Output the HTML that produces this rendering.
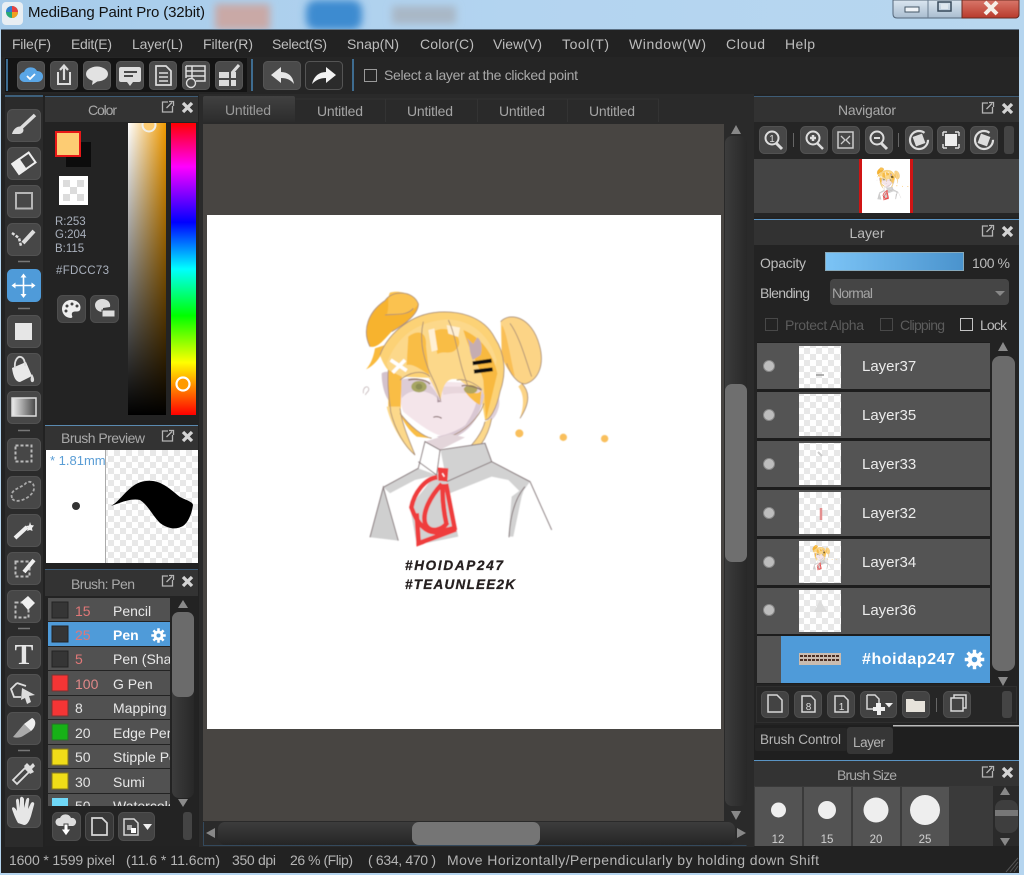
<!DOCTYPE html>
<html><head><meta charset="utf-8"><title>MediBang Paint Pro</title>
<style>html,body{margin:0;padding:0;background:#b3d4ee}svg{display:block}text{font-family:"Liberation Sans",sans-serif}</style></head>
<body>
<svg xmlns="http://www.w3.org/2000/svg" width="1024" height="875" viewBox="0 0 1024 875">
<defs>
<pattern id="ck2" width="12" height="12" patternUnits="userSpaceOnUse"><rect width="12" height="12" fill="#fff"/><rect width="6" height="6" fill="#e8e8e8"/><rect x="6" y="6" width="6" height="6" fill="#e8e8e8"/></pattern>
<linearGradient id="tb" x1="0" y1="0" x2="1" y2="0"><stop offset="0" stop-color="#a6cbea"/><stop offset=".5" stop-color="#b3d4f0"/><stop offset="1" stop-color="#b8d7ef"/></linearGradient>
<linearGradient id="sv" x1="0" y1="0" x2="1" y2="0"><stop offset="0" stop-color="#fff"/><stop offset="1" stop-color="#f09a00"/></linearGradient>
<linearGradient id="svk" x1="0" y1="0" x2="0" y2="1"><stop offset="0" stop-color="#000" stop-opacity="0"/><stop offset="1" stop-color="#000"/></linearGradient>
<linearGradient id="hue" x1="0" y1="0" x2="0" y2="1"><stop offset="0" stop-color="#f00"/><stop offset=".15" stop-color="#f0f"/><stop offset=".34" stop-color="#00f"/><stop offset=".5" stop-color="#0ff"/><stop offset=".66" stop-color="#0f0"/><stop offset=".82" stop-color="#ff0"/><stop offset="1" stop-color="#f00"/></linearGradient>
<linearGradient id="op" x1="0" y1="0" x2="1" y2="0"><stop offset="0" stop-color="#7cc4f6"/><stop offset="1" stop-color="#4a93cd"/></linearGradient>
<linearGradient id="sbv" x1="0" y1="0" x2="1" y2="0"><stop offset="0" stop-color="#3c3c3c"/><stop offset="1" stop-color="#282828"/></linearGradient>
<linearGradient id="sbh" x1="0" y1="0" x2="0" y2="1"><stop offset="0" stop-color="#3d3d3d"/><stop offset="1" stop-color="#252525"/></linearGradient>
<linearGradient id="cl" x1="0" y1="0" x2="0" y2="1"><stop offset="0" stop-color="#d9776a"/><stop offset="1" stop-color="#b83a2c"/></linearGradient>
<linearGradient id="wb" x1="0" y1="0" x2="0" y2="1"><stop offset="0" stop-color="#dbe6f0"/><stop offset="1" stop-color="#a9bdd0"/></linearGradient>
<linearGradient id="gs" x1="0" y1="0" x2="1" y2="0"><stop offset="0" stop-color="#eee"/><stop offset="1" stop-color="#444"/></linearGradient>
<linearGradient id="tab1" x1="0" y1="0" x2="0" y2="1"><stop offset="0" stop-color="#414141"/><stop offset="1" stop-color="#2c2c2c"/></linearGradient>
<filter id="b1"><feGaussianBlur stdDeviation="4"/></filter>
<filter id="b0"><feGaussianBlur stdDeviation=".45"/></filter>
<clipPath id="clipBrush"><rect x="48" y="598" width="122" height="208"/></clipPath>
<clipPath id="clipBP"><rect x="46" y="450" width="59" height="113"/></clipPath>
<clipPath id="clipSV"><rect x="128" y="123" width="38" height="292"/></clipPath>
<g id="hd" fill="none" stroke="#b5b5b5"><path d="M7 2H1.5V12H11.5V6" stroke-width="1.3"/><path d="M5.5 8L11 2.500M8 1.500H12.500V6" stroke-width="1.300"/><path d="M22 3L31 12M31 3L22 12" stroke="#d4d4d4" stroke-width="3.300"/></g>
<g id="gear" fill="#fff"><circle r="5.800"/><g stroke="#fff" stroke-width="3"><path d="M0-8.500V8.500M-8.500 0H8.500M-6-6L6 6M-6 6L6-6"/></g><circle r="2.400" fill="#4f9ad6"/></g>
<g id="art">
  <!-- back buns -->
  <path d="M60 200C35 150 55 95 105 62C125 30 190 30 205 72C205 100 170 130 125 155C105 175 85 205 60 200Z" fill="#f7b32f"/>
  <path d="M120 38C150 28 195 45 205 72C190 95 160 105 110 105C120 80 110 55 120 38Z" fill="#fbc250"/>
  <path d="M75 205C70 235 60 255 48 268C75 255 95 230 105 195Z" fill="#f9ba3e"/>
  <path d="M452 125C480 95 545 110 568 195C585 255 565 300 525 312C490 305 470 265 455 222Z" fill="#fcd486"/>
  <path d="M455 135C470 150 480 230 495 290C470 270 458 240 455 222Z" fill="#fabf55"/>
  <path d="M515 310C540 335 540 370 510 415C525 370 520 340 505 320Z" fill="#fcd486"/>
  <!-- ears -->
  <path d="M95 280C110 270 130 275 145 300L145 385C120 380 95 340 95 280Z" fill="#d3c2cd"/>
  <path d="M420 330C450 335 455 370 440 400C430 420 420 425 410 420Z" fill="#ded0d8"/>
  <!-- hair base -->
  <path d="M90 225C110 170 170 110 250 98C320 90 400 105 435 175C465 220 470 280 450 335C440 385 420 420 405 420L385 300L155 290C150 300 110 285 90 225Z" fill="#fcd276"/>
  <!-- face -->
  <path d="M150 300L405 310C405 370 385 420 300 470C260 478 190 420 160 395C150 370 148 340 150 300Z" fill="#f4e5ea"/>
  <path d="M385 320L405 310C405 370 385 420 340 445C370 400 385 370 385 320ZM260 470C310 460 350 440 385 400C365 450 320 475 285 480Z" fill="#d9c8d3"/>
  <path d="M150 300C200 285 240 300 265 350L275 365L250 345C210 325 175 330 155 355Z" fill="#ddccd6"/>
  <path d="M275 320C320 320 370 320 400 320L395 345C360 340 320 335 280 345Z" fill="#e8d6dc"/>
  <!-- bangs -->
  <path d="M110 250C140 170 200 125 290 118C370 120 420 170 440 240C430 290 420 310 410 370L395 325C380 315 360 330 330 300C300 290 280 300 272 360C255 330 245 300 225 280C190 268 165 285 148 300C130 290 115 270 110 250Z" fill="#fcd88a"/>
  <path d="M175 170C200 150 232 150 228 200L238 285C215 270 190 250 170 255Z" fill="#f9bd45"/>
  <path d="M250 155C295 130 340 170 325 200C305 230 285 210 262 222Z" fill="#f9bd45"/>
  <path d="M340 150C390 170 430 220 442 280C430 330 420 370 408 420L400 300C390 260 360 220 340 150Z" fill="#f8b93f"/>
  <path d="M235 150l18-5 10 65-18 5zM290 135l40 8-5 28-30-10z" fill="#fff0d4"/>
  <path d="M115 270L155 290L152 385L115 385Z" fill="#f9bd45"/>
  <path d="M110 380C120 430 160 500 195 525C172 470 152 420 150 380Z" fill="#fcd88a"/>
  <path d="M150 400C180 440 220 470 245 475L200 470C175 450 160 425 150 400Z" fill="#f9bd45"/>
  <path d="M405 425C395 470 350 510 330 535C380 530 415 470 425 415Z" fill="#fcd88a"/>
  <path d="M340 325C370 340 385 345 395 330L390 375C370 365 350 345 340 325Z" fill="#f9bd45"/>
  <!-- eyes etc -->
  <ellipse cx="207" cy="320" rx="23" ry="17" fill="#a7a663"/><ellipse cx="207" cy="320" rx="10" ry="9" fill="#8d8e55"/>
  <ellipse cx="362" cy="328" rx="20" ry="13" fill="#b0a55f"/>
  <path d="M175 300C190 296 225 296 240 312M335 318C350 312 380 322 395 330" fill="none" stroke="#8a6e5e" stroke-width="4"/>
  <path d="M250 412C260 408 268 410 275 415" fill="none" stroke="#7a6060" stroke-width="3"/>
  <path d="M262 345l4 15 10 5-14 2z" fill="#a58f98"/>
  <path d="M348 172C362 188 354 205 368 240L392 225C398 205 395 180 382 172L370 192Z" fill="#c5adb2"/>
  <path d="M368 250L425 242M372 275L428 268" stroke="#111" stroke-width="12" fill="none"/>
  <path d="M122 240L170 272M165 240L128 278" stroke="#fff" stroke-width="11" fill="none"/>
  <!-- hair lines -->
  <g fill="none" stroke="#a98d76" stroke-width="2.600">
    <path d="M90 225C110 170 170 110 250 98C320 90 400 105 435 175C465 220 470 280 450 335C440 385 420 420 405 420"/>
    <path d="M220 125C205 190 225 250 250 300C262 325 268 345 272 362M295 120C320 170 325 250 355 320M150 300C175 280 215 265 240 290M320 300C345 295 375 310 395 328"/>
    <path d="M115 270C110 330 122 380 122 395C135 450 165 500 195 525C175 475 155 430 150 385"/>
    <path d="M405 425C395 470 350 510 330 535C380 530 415 470 425 415"/>
    <path d="M60 200C35 150 55 95 105 62C125 30 190 30 205 72C205 100 170 130 125 155M105 105C130 100 170 110 190 85"/>
    <path d="M452 125C480 95 545 110 568 195C585 255 565 300 525 312C500 310 480 280 470 250M480 130C510 170 530 250 545 290M515 310C540 335 540 370 510 415"/>
    <path d="M150 400C180 440 220 470 245 475M300 470C340 455 385 420 402 370"/>
  </g>
  <path d="M40 340c-2-18 12-25 16-15 3 10-8 12-10 20" fill="none" stroke="#b8a8aa" stroke-width="2"/>
  <!-- body -->
  <path d="M100 622L205 565L225 485L270 510L405 490L425 545L540 605L605 750L490 770L300 800L60 772Z" fill="#fff"/>
  <path d="M225 485L270 510L345 472L300 462Z" fill="#e3d5da"/>
  <path d="M100 622L60 772L145 782Z" fill="#cfcfcf"/>
  <path d="M100 622L205 565L260 585L195 600L120 640Z" fill="#d2d2d2"/>
  <path d="M272 512L405 490L425 545L540 605L515 640L475 600L425 590L300 640L290 605Z" fill="#d2d2d2"/>
  <path d="M525 620L485 650L475 770L490 770L515 650Z" fill="#d2d2d2"/>
  <path d="M260 580L290 605L325 770L200 795L180 680Z" fill="#d2d2d2"/>
  <path d="M225 485L205 545L260 585L270 510Z" fill="#fff"/>
  <g fill="none" stroke="#86787a" stroke-width="3">
    <path d="M60 772L100 622L145 782M100 622L205 565L225 485L270 510L405 490L425 545L540 605L605 750M270 510L260 585M290 605L425 545M205 545L260 585M525 620C490 660 480 720 477 772"/>
  </g>
  <!-- tie -->
  <path d="M263 562L295 565L292 605L265 602Z" fill="#ef3c3c"/>
  <g fill="none" stroke="#ef3c3c" stroke-width="14">
    <path d="M262 592C225 595 192 640 184 682C200 730 230 762 265 756L314 744L288 612"/>
    <path d="M276 612C240 650 215 700 226 732C240 762 278 750 292 728"/>
    <path d="M278 612C276 660 282 700 290 735"/>
    <path d="M200 700L206 790L318 748"/>
  </g>
  <path d="M277 580L283 590" stroke="#fff" stroke-width="4"/>
  <g fill="#f9bf5c"><circle cx="508" cy="460" r="12"/><circle cx="640" cy="472" r="11"/><circle cx="764" cy="476" r="11"/></g>
</g>
</defs>

<!-- title bar -->
<rect width="1024" height="875" fill="#b5d5ef"/>
<rect width="1024" height="30" fill="url(#tb)"/>
<g filter="url(#b1)"><rect x="215" y="4" width="55" height="26" fill="#c9a9a6"/><rect x="306" y="0" width="56" height="30" rx="10" fill="#3d8bd0"/><rect x="392" y="6" width="64" height="18" fill="#a9b7c6"/></g>
<rect x="2" y="2" width="21" height="23" rx="4" fill="#e8eef3"/>
<circle cx="12" cy="12" r="6" fill="#28a878"/><path d="M12 6A6 6 0 0 1 18 12H12Z" fill="#e84040"/><path d="M18 12A6 6 0 0 1 12 18V12Z" fill="#f0a020"/><path d="M6 12a6 6 0 0 1 6-6v6z" fill="#3080d0"/>
<text x="28" y="17" font-size="15" fill="#111" textLength="177">MediBang Paint Pro (32bit)</text>
<path d="M893 0V14Q893 18 897 18H1015Q1019 18 1019 14V0Z" fill="url(#wb)" stroke="#55677a"/>
<path d="M962 0H1019V14Q1019 18 1015 18H962Z" fill="url(#cl)" stroke="#6a2b22"/>
<path d="M928 0V18" stroke="#6a7d90"/>
<rect x="905" y="7" width="14" height="5" fill="#f0f4f8" stroke="#455767"/>
<rect x="938" y="2" width="13" height="9" fill="none" stroke="#36495a" stroke-width="1.500"/><rect x="941" y="4" width="7" height="5" fill="#dfe8f0"/>
<path d="M985 2L997 14M997 2L985 14" stroke="#f6efe8" stroke-width="4"/>

<!-- window -->
<rect x="1" y="29" width="1018" height="844" fill="#222"/>
<rect x="1" y="29" width="1018" height="1" fill="#5c7185"/>
<g font-size="14" fill="#bdbdbd">
<text x="12" y="49" textLength="39">File(F)</text><text x="71" y="49" textLength="41">Edit(E)</text><text x="132" y="49" textLength="51">Layer(L)</text><text x="203" y="49" textLength="50">Filter(R)</text><text x="272" y="49" textLength="55">Select(S)</text><text x="347" y="49" textLength="52">Snap(N)</text><text x="420" y="49" textLength="54">Color(C)</text><text x="493" y="49" textLength="49">View(V)</text><text x="562" y="49" textLength="47">Tool(T)</text><text x="629" y="49" textLength="77">Window(W)</text><text x="726" y="49" textLength="39">Cloud</text><text x="785" y="49" textLength="30">Help</text>
</g>
<rect x="1" y="57" width="1018" height="37" fill="#252525"/>
<rect x="5" y="58" width="242" height="34" fill="#141414"/>
<rect x="6" y="59" width="2" height="32" fill="#3e6c90"/><rect x="251" y="59" width="2" height="32" fill="#3e6c90"/><rect x="352" y="59" width="2" height="32" fill="#3e6c90"/>
<!-- toolbar buttons -->
<g fill="#4a4a4a" stroke="#555">
<rect x="17.500" y="61.500" width="27" height="28" rx="4"/><rect x="50.500" y="61.500" width="27" height="28" rx="4"/><rect x="83.500" y="61.500" width="27" height="28" rx="4"/><rect x="116.500" y="61.500" width="27" height="28" rx="4"/><rect x="149.500" y="61.500" width="27" height="28" rx="4"/><rect x="182.500" y="61.500" width="27" height="28" rx="4"/><rect x="215.500" y="61.500" width="27" height="28" rx="4"/><rect x="263.500" y="61.500" width="37" height="28" rx="4"/>
<rect x="305.500" y="61.500" width="37" height="28" rx="4" fill="#2b2b2b"/></g>
<!-- cloud -->
<path d="M25 82a5 5 0 0 1-1-10a7 6.500 0 0 1 13-1a5.500 5.500 0 0 1 1 11Z" fill="#5aa6e6"/><path d="M27 76l3 3 5-5" fill="none" stroke="#fff" stroke-width="1.800"/>
<!-- share -->
<path d="M58 72V84H70V72" fill="none" stroke="#ddd" stroke-width="2"/><path d="M64 80V66M60 70L64 65.500 68 70" fill="none" stroke="#ddd" stroke-width="2.200"/>
<!-- bubble -->
<ellipse cx="97" cy="74" rx="11" ry="7.500" fill="#e2e2e2"/><path d="M93 79l-1 6 6-4z" fill="#e2e2e2"/>
<!-- comment -->
<path d="M121 67h18a2 2 0 0 1 2 2v11a2 2 0 0 1-2 2h-6l-3 4-3-4h-6a2 2 0 0 1-2-2v-11a2 2 0 0 1 2-2z" fill="#ddd"/><path d="M124 72h13M124 76h9" stroke="#4a4a4a" stroke-width="2"/>
<!-- doc -->
<path d="M156 66H166L171 71V85H156Z" fill="none" stroke="#ddd" stroke-width="1.700"/><path d="M159 73H168M159 77H168M159 81H168" stroke="#ddd" stroke-width="1.500"/>
<!-- list -->
<path d="M186 66H205V81H196M186 66V78M186 71H205M186 76H205M192 66V78" fill="none" stroke="#ddd" stroke-width="1.500"/><circle cx="191" cy="83" r="4.500" fill="none" stroke="#ddd" stroke-width="1.400"/>
<!-- table pen -->
<path d="M219 72H229V78H219ZM231 72H236V78H231ZM219 80H229V86H219ZM231 80H236V86H231Z" fill="#ddd"/><path d="M232 73L239 65" stroke="#ddd" stroke-width="3"/>
<!-- undo redo -->
<path d="M271 75L281 67V72C288 72 293 76 294 84C291 80 287 78 281 78V83Z" fill="#e6e6e6"/>
<path d="M336 75L326 67V72C319 72 314 76 312 84C316 80 320 78 326 78V83Z" fill="#f2f2f2"/>
<rect x="364.500" y="69.500" width="12" height="12" fill="none" stroke="#9a9a9a"/>
<text x="384" y="80" font-size="14" fill="#a8a8a8" textLength="194">Select a layer at the clicked point</text>

<!-- left toolstrip -->
<rect x="5" y="96" width="38" height="751" fill="#2b2b2b"/><rect x="5" y="95" width="38" height="2" fill="#3d5f7a"/>
<g fill="#474747" stroke="#525252">
<rect x="7.500" y="109.500" width="33" height="32" rx="5"/><rect x="7.500" y="147.500" width="33" height="32" rx="5"/><rect x="7.500" y="185.500" width="33" height="32" rx="5"/><rect x="7.500" y="223.500" width="33" height="32" rx="5"/>
<rect x="7.500" y="269.500" width="33" height="32" rx="5" fill="#4f9bd9" stroke="#4f9bd9"/>
<rect x="7.500" y="315.500" width="33" height="32" rx="5"/><rect x="7.500" y="353.500" width="33" height="32" rx="5"/><rect x="7.500" y="391.500" width="33" height="32" rx="5"/>
<rect x="7.500" y="438.500" width="33" height="32" rx="5"/><rect x="7.500" y="476.500" width="33" height="32" rx="5"/><rect x="7.500" y="514.500" width="33" height="32" rx="5"/><rect x="7.500" y="552.500" width="33" height="32" rx="5"/><rect x="7.500" y="590.500" width="33" height="32" rx="5"/>
<rect x="7.500" y="636.500" width="33" height="32" rx="5"/><rect x="7.500" y="674.500" width="33" height="32" rx="5"/><rect x="7.500" y="712.500" width="33" height="32" rx="5"/>
<rect x="7.500" y="757.500" width="33" height="32" rx="5"/><rect x="7.500" y="795.500" width="33" height="32" rx="5"/>
</g>
<path d="M18 261.500H30M18 308.500H30M18 430.500H30M18 628.500H30M18 750.500H30" stroke="#777" stroke-width="1.500"/>
<!-- brush -->
<path d="M35 115L21 128" stroke="#ddd" stroke-width="3.500"/><path d="M12 134C13 129 18 125 22 127C25 130 23 134 19 134Z" fill="#ddd"/>
<!-- eraser -->
<g transform="rotate(-35 23.500 163.500)"><rect x="14" y="157.500" width="20" height="12" fill="#474747" stroke="#eee" stroke-width="2"/><rect x="13" y="156.500" width="10" height="14" fill="#eee"/></g>
<!-- rect -->
<rect x="16" y="193" width="16" height="15.500" fill="none" stroke="#b5b5b5" stroke-width="2"/>
<!-- polyline+pen -->
<path d="M12 233L19 238 21 246" fill="none" stroke="#ddd" stroke-width="2.500" stroke-dasharray="3 1.500"/><path d="M23 243L34 231" stroke="#ddd" stroke-width="4"/>
<!-- move -->
<g stroke="#fff" stroke-width="1.600" fill="#fff"><path d="M13 285.500H34M23.500 275V296"/><path d="M23.500 273.500l3 4h-6zM23.500 298l3-4h-6zM11.500 285.500l4 3v-6zM35.500 285.500l-4 3v-6z" stroke="none"/></g>
<!-- square -->
<rect x="15" y="323" width="17" height="17" fill="#e6e6e6"/>
<!-- bucket -->
<path d="M12 368L26 362 32 376 20 382C15 382 13 375 12 368Z" fill="#e8e8e8"/><path d="M15 368C14 360 18 356 21 357C24 358 25 362 25 366" fill="none" stroke="#ddd" stroke-width="1.800"/><path d="M32 374C34 377 35 381 33 382C30 383 30 378 32 374Z" fill="#ddd"/>
<!-- gradient -->
<rect x="12" y="398" width="24" height="18" fill="url(#gs)" stroke="#ddd" stroke-width="1.500"/>
<!-- dashed rect -->
<rect x="15.500" y="445.500" width="16" height="16" fill="none" stroke="#b9b9b9" stroke-width="2" stroke-dasharray="3 2"/>
<!-- lasso -->
<path d="M12 498C9 489 22 488 26 483C32 479 36 486 33 492C28 500 14 504 12 498Z" fill="none" stroke="#a9a9a9" stroke-width="1.800" stroke-dasharray="3 2"/>
<!-- wand -->
<path d="M15 538L27 527" stroke="#eee" stroke-width="4"/><path d="M30 522l1 3 3 .5-2 2.500.5 3-2.500-1-3 1 1-3-2-2 3-.5z" fill="#eee"/>
<!-- dashed pen -->
<rect x="15.500" y="561.500" width="14" height="15" fill="none" stroke="#bbb" stroke-width="2" stroke-dasharray="3 2"/><path d="M24 572L34 560" stroke="#eee" stroke-width="4"/>
<!-- dashed eraser -->
<rect x="15.500" y="602.500" width="13" height="15" fill="none" stroke="#bbb" stroke-width="2" stroke-dasharray="3 2"/><path d="M21 602L28 596 35 603 28 610Z" fill="#eee"/>
<!-- T -->
<text x="24" y="664" font-size="28" font-weight="bold" text-anchor="middle" fill="#e6e6e6" style="font-family:'Liberation Serif',serif">T</text>
<!-- polygon arrow -->
<path d="M17 683L11 689 14 697H21M17 683L26 686" fill="none" stroke="#ddd" stroke-width="1.800"/><path d="M22 688L35 695 29 696 31 702 27 704 25 698 21 700Z" fill="#ddd"/>
<!-- knife -->
<path d="M13 737L24 724 31 731 23 736C20 738 16 738 13 737Z" fill="#aaa"/><path d="M24 724L32 718C37 720 36 727 31 731Z" fill="#eee"/>
<!-- dropper -->
<path d="M15 782L13 780 25 768 29 772 17 784Z" fill="none" stroke="#ddd" stroke-width="1.800"/><path d="M24 766L27 763 30 766 33 763 35 766 32 769 34 772 30 774Z" fill="#ddd"/>
<!-- hand -->
<path d="M18 823C15 818 13 812 12 809C12 806 15 807 17 811L16 801C16 798 19 798 19 801L20 808V799C20 796 23 796 24 799V808L26 800C27 797 30 797 29 801L28 809 31 803C33 801 35 803 34 805L31 816C29 822 27 825 24 825Z" fill="#e6e6e6"/>

<!-- color panel -->
<rect x="45" y="96" width="153" height="324" fill="#232323"/><rect x="45" y="96" width="153" height="1" fill="#3e5c76"/>
<rect x="45" y="97" width="153" height="25" fill="#333"/>
<text x="88" y="115" font-size="14" fill="#a9a9a9" textLength="29">Color</text>
<use href="#hd" x="161" y="100"/>
<rect x="66" y="142" width="25" height="25" fill="#0c0c0c"/>
<rect x="56" y="132" width="24" height="24" fill="#fdcc73" stroke="#e81818" stroke-width="2"/>
<rect x="59" y="176" width="29" height="29" fill="#fff"/><g fill="#dcdcdc"><rect x="63" y="180" width="7" height="7"/><rect x="77" y="180" width="7" height="7"/><rect x="70" y="187" width="7" height="7"/><rect x="63" y="194" width="7" height="7"/><rect x="77" y="194" width="7" height="7"/></g>
<g font-size="11.500" fill="#a9b0bc"><text x="55" y="225">R:253</text><text x="55" y="238">G:204</text><text x="55" y="252">B:115</text><text x="56" y="274" textLength="53">#FDCC73</text></g>
<rect x="57.500" y="295.500" width="28" height="27" rx="5" fill="#434343" stroke="#4e4e4e"/><rect x="90.500" y="295.500" width="28" height="27" rx="5" fill="#434343" stroke="#4e4e4e"/>
<path d="M71 300C78 300 82 305 80 310C78 313 74 310 72 313C71 316 74 317 71 318C65 318 62 313 62 309C62 304 66 300 71 300Z" fill="#eee"/>
<g fill="#434343"><circle cx="67" cy="306" r="1.500"/><circle cx="72" cy="304" r="1.500"/><circle cx="77" cy="306" r="1.500"/><circle cx="66" cy="311" r="1.500"/></g>
<path d="M102 299C108 299 111 303 110 307L103 308V312C98 312 95 309 95 305C95 302 98 299 102 299Z" fill="#ddd"/><rect x="102" y="310" width="13" height="7" fill="#ddd" stroke="#434343"/>
<rect x="128" y="123" width="38" height="292" fill="url(#sv)"/><rect x="128" y="123" width="38" height="292" fill="url(#svk)"/>
<circle cx="149" cy="125" r="6.500" fill="#fdcc73" stroke="#f0efe8" stroke-width="2" clip-path="url(#clipSV)"/>
<rect x="171" y="123" width="25" height="292" fill="url(#hue)"/>
<circle cx="183" cy="384" r="6.500" fill="#ff9a00" stroke="#fff" stroke-width="2.200"/>

<!-- brush preview -->
<rect x="45" y="425" width="153" height="1" fill="#5a8ab0"/>
<rect x="45" y="426" width="153" height="24" fill="#333"/>
<text x="61" y="443" font-size="14" fill="#a9a9a9" textLength="84">Brush Preview</text>
<use href="#hd" x="161" y="429"/>
<rect x="46" y="450" width="59" height="113" fill="#fff"/><rect x="106" y="450" width="92" height="113" fill="url(#ck2)"/><rect x="105" y="450" width="1" height="113" fill="#aaa"/>
<text x="50" y="465" font-size="13" fill="#5a9dd5" clip-path="url(#clipBP)">* 1.81mm</text>
<circle cx="76" cy="506" r="4" fill="#333"/>
<path d="M111 506C122 500 130 482 146 481C160 479 170 489 180 497C186 500 193 502 193 505C192 512 189 522 183 526C176 530 168 529 160 523C152 515 148 505 140 500C130 498 120 503 111 506Z" fill="#000"/>

<!-- brush panel -->
<rect x="45" y="569" width="153" height="1" fill="#3e5c76"/>
<rect x="45" y="570" width="153" height="26" fill="#333"/>
<text x="71" y="589" font-size="14" fill="#a9a9a9" textLength="64">Brush: Pen</text>
<use href="#hd" x="161" y="574"/>
<rect x="45" y="596" width="153" height="250" fill="#232323"/>
<g clip-path="url(#clipBrush)">
<g fill="#515151"><rect x="48" y="598" width="122" height="23"/><rect x="48" y="647" width="122" height="23"/><rect x="48" y="671" width="122" height="24"/><rect x="48" y="696" width="122" height="23"/><rect x="48" y="720" width="122" height="24"/><rect x="48" y="745" width="122" height="23"/><rect x="48" y="769" width="122" height="24"/><rect x="48" y="794" width="122" height="24"/></g>
<rect x="48" y="622" width="122" height="24" fill="#4f9bd9"/>
<g stroke="#222"><rect x="52" y="602" width="16" height="16" fill="#353535"/><rect x="52" y="626" width="16" height="16" fill="#353535"/><rect x="52" y="651" width="16" height="16" fill="#353535"/></g>
<g stroke="#733"><rect x="52" y="675" width="16" height="16" fill="#f53535"/><rect x="52" y="700" width="16" height="16" fill="#f53535"/></g>
<rect x="52" y="724" width="16" height="16" fill="#17b117" stroke="#2a6a2a"/>
<g stroke="#86791c"><rect x="52" y="749" width="16" height="16" fill="#f0dd18"/><rect x="52" y="773" width="16" height="16" fill="#f0dd18"/></g>
<rect x="52" y="798" width="16" height="16" fill="#6fd8f8"/>
<g font-size="14"><text x="75" y="616" fill="#e07878">15</text><text x="75" y="640" fill="#e07878">25</text><text x="75" y="664" fill="#e07878">5</text><text x="75" y="689" fill="#e08888">100</text><text x="75" y="713" fill="#e4e4e4">8</text><text x="75" y="738" fill="#e4e4e4">20</text><text x="75" y="762" fill="#e4e4e4">50</text><text x="75" y="787" fill="#e4e4e4">30</text><text x="75" y="811" fill="#e4e4e4">50</text></g>
<g font-size="14" fill="#e8e8e8"><text x="113" y="616">Pencil</text><text x="113" y="640" font-weight="bold" fill="#fff">Pen</text><text x="113" y="664">Pen (Sharp)</text><text x="113" y="689">G Pen</text><text x="113" y="713">Mapping Pen</text><text x="113" y="738">Edge Pen</text><text x="113" y="762">Stipple Pen</text><text x="113" y="787">Sumi</text><text x="113" y="811">Watercolor</text></g>
<use href="#gear" transform="translate(158.500,635.500) scale(.85)"/>
</g>
<rect x="172" y="612" width="22" height="186" rx="7" fill="url(#sbv)"/>
<rect x="172" y="612" width="22" height="85" rx="7" fill="#6b6b6b"/>
<path d="M183 600L188 608H178ZM183 807L188 799H178Z" fill="#8a8a8a"/>
<rect x="52.500" y="812.500" width="28" height="28" rx="5" fill="#434343" stroke="#4e4e4e"/><rect x="85.500" y="812.500" width="28" height="28" rx="5" fill="#383838" stroke="#4e4e4e"/><rect x="118.500" y="812.500" width="36" height="28" rx="5" fill="#434343" stroke="#4e4e4e"/>
<rect x="183" y="812" width="9" height="28" rx="3" fill="#444"/>
<path d="M59 826a4 4 0 0 1 1-8a6 6 0 0 1 11 0a4 4 0 0 1 2 8Z" fill="#ddd"/><path d="M66 836L71 829H68V824H64V829H61Z" fill="#fff" stroke="#434343"/>
<path d="M92 818H102L107 823V835H92Z" fill="none" stroke="#d8d8d8" stroke-width="1.700"/>
<path d="M124 819H134L138 823V835H124Z" fill="none" stroke="#d8d8d8" stroke-width="1.500"/><rect x="127" y="825" width="5" height="5" fill="#aaa"/><rect x="131" y="828" width="5" height="5" fill="#fff"/><path d="M143 824H152L147.500 830Z" fill="#eee"/>

<!-- tabs & canvas -->
<rect x="199" y="94" width="555" height="754" fill="#2a2a2a"/>
<path d="M203 122V98Q203 96 205 96H293Q295 96 295 98V122Z" fill="url(#tab1)"/>
<path d="M295.500 99H385.500V122M385.500 99H477.500V122M477.500 99H567.500V122M567.500 99H658.500V122" fill="none" stroke="#333"/>
<g font-size="14" fill="#a4a4a4"><text x="225" y="115" textLength="46" fill="#9a9a9a">Untitled</text><text x="317" y="116" textLength="46">Untitled</text><text x="407" y="116" textLength="46">Untitled</text><text x="499" y="116" textLength="46">Untitled</text><text x="589" y="116" textLength="46">Untitled</text></g>
<rect x="203" y="124" width="521" height="697" fill="#484542"/>
<rect x="207" y="215" width="514" height="514" fill="#fff"/>
<g filter="url(#b0)"><use href="#art" transform="translate(350,280) scale(.3333)"/></g>
<text x="405" y="570" font-size="13.500" font-weight="bold" font-style="italic" fill="#262020" stroke="#262020" stroke-width=".3" textLength="98">#HOIDAP247</text>
<text x="405" y="589" font-size="13.500" font-weight="bold" font-style="italic" fill="#262020" stroke="#262020" stroke-width=".3" textLength="110">#TEAUNLEE2K</text>
<!-- canvas scrollbars -->
<rect x="724" y="124" width="24" height="697" fill="#2a2a2a"/>
<rect x="725" y="136" width="22" height="670" rx="7" fill="url(#sbv)"/>
<rect x="725" y="384" width="22" height="178" rx="7" fill="#6f6f6f"/>
<path d="M736 125L741 134H731ZM736 820L741 811H731Z" fill="#888"/>
<rect x="204" y="822" width="544" height="24" fill="#2a2a2a"/>
<rect x="218" y="822" width="517" height="23" rx="7" fill="url(#sbh)"/>
<rect x="412" y="822" width="128" height="23" rx="7" fill="#757575"/>
<path d="M206 833L215 828V838ZM746 833L737 828V838Z" fill="#888"/>
<path d="M203.500 822V845.500H746.500" fill="none" stroke="#34495c"/>

<!-- navigator -->
<rect x="754" y="97" width="265" height="120" fill="#252525"/><rect x="754" y="96" width="265" height="1" fill="#3e5c76"/>
<rect x="754" y="97" width="265" height="25" fill="#323232"/>
<text x="838" y="115" font-size="14" fill="#a9a9a9" textLength="58">Navigator</text>
<use href="#hd" x="981" y="101"/>
<g fill="#474747" stroke="#525252">
<rect x="759.500" y="126.500" width="27" height="27" rx="5"/><rect x="800.500" y="126.500" width="27" height="27" rx="5"/><rect x="832.500" y="126.500" width="27" height="27" rx="5"/><rect x="865.500" y="126.500" width="27" height="27" rx="5"/><rect x="905.500" y="126.500" width="27" height="27" rx="5"/><rect x="937.500" y="126.500" width="27" height="27" rx="5"/><rect x="970.500" y="126.500" width="27" height="27" rx="5"/></g>
<rect x="1004" y="126" width="10" height="28" rx="3" fill="#444"/>
<path d="M793.500 133V147M898.500 133V147" stroke="#666"/>
<g fill="none" stroke="#ddd" stroke-width="2"><circle cx="772" cy="138" r="6.500"/><path d="M776 143L782 149" stroke-width="3"/><circle cx="813" cy="138" r="6.500"/><path d="M817 143L823 149M810 138H816M813 135V141" stroke-width="2.500"/><circle cx="877" cy="138" r="6.500"/><path d="M881 143L887 149" stroke-width="3"/><path d="M874 138H880"/></g>
<text x="772" y="142" font-size="10" fill="#ddd" text-anchor="middle">1</text>
<rect x="838" y="132" width="15" height="16" fill="none" stroke="#ccc" stroke-width="1.500"/><path d="M841 136L845 140 841 144M850 136L846 140 850 144" fill="none" stroke="#ccc" stroke-width="1.300"/>
<circle cx="919" cy="140" r="9" fill="none" stroke="#ddd" stroke-width="2.200" stroke-dasharray="48 8"/><rect x="914" y="135" width="10" height="10" fill="#ddd" transform="rotate(-20 919 140)"/>
<rect x="945" y="134" width="12" height="12" fill="#eee"/><path d="M943 132h4M943 132v4M959 132h-4M959 132v4M943 148h4M943 148v-4M959 148h-4M959 148v-4" stroke="#ddd" stroke-width="1.500"/>
<circle cx="984" cy="140" r="9" fill="none" stroke="#ddd" stroke-width="2.200" stroke-dasharray="48 8"/><rect x="979" y="135" width="10" height="10" fill="#ddd" transform="rotate(20 984 140)"/>
<rect x="754" y="159" width="265" height="54" fill="#444"/>
<rect x="860" y="159" width="52" height="54" fill="#fff"/><rect x="859" y="159" width="3" height="54" fill="#d01414"/><rect x="910" y="159" width="3" height="54" fill="#d01414"/>
<use href="#art" transform="translate(875,166) scale(.043)"/>

<!-- layer panel -->
<rect x="754" y="219" width="265" height="1" fill="#5a94c4"/>
<rect x="754" y="220" width="265" height="25" fill="#323232"/>
<text x="867" y="238" font-size="14" fill="#bbb" text-anchor="middle">Layer</text>
<use href="#hd" x="981" y="224"/>
<rect x="754" y="245" width="265" height="480" fill="#232323"/>
<text x="760" y="268" font-size="14" fill="#bdbdbd" textLength="46">Opacity</text>
<rect x="825.500" y="252.500" width="138" height="18" fill="url(#op)" stroke="#8ab"/>
<text x="972" y="268" font-size="14" fill="#bbb" textLength="38">100 %</text>
<text x="760" y="298" font-size="14" fill="#bdbdbd" textLength="50">Blending</text>
<rect x="830" y="279" width="179" height="26" rx="4" fill="#454545"/>
<text x="832" y="298" font-size="14" fill="#a4a4a4" textLength="41">Normal</text>
<path d="M995 291H1005L1000 296Z" fill="#888"/>
<rect x="765.500" y="318.500" width="12" height="12" fill="none" stroke="#484848"/><text x="785" y="330" font-size="14" fill="#5c5c5c" textLength="79">Protect Alpha</text>
<rect x="880.500" y="318.500" width="12" height="12" fill="none" stroke="#484848"/><text x="900" y="330" font-size="14" fill="#5c5c5c" textLength="45">Clipping</text>
<rect x="960.500" y="318.500" width="12" height="12" fill="none" stroke="#c4c4c4"/><text x="980" y="330" font-size="14" fill="#bbb" textLength="27">Lock</text>
<!-- rows -->
<rect x="757" y="342" width="233" height="342" fill="#1d1d1d"/>
<g fill="#545454"><rect x="757" y="343" width="233" height="46"/><rect x="757" y="392" width="233" height="46"/><rect x="757" y="441" width="233" height="46"/><rect x="757" y="490" width="233" height="46"/><rect x="757" y="539" width="233" height="46"/><rect x="757" y="588" width="233" height="46"/><rect x="757" y="636" width="24" height="47"/></g>
<rect x="781" y="636" width="209" height="47" fill="#4f9bd9"/>
<g fill="#bdbdbd" stroke="#888"><circle cx="769" cy="366" r="5.500"/><circle cx="769" cy="415" r="5.500"/><circle cx="769" cy="464" r="5.500"/><circle cx="769" cy="513" r="5.500"/><circle cx="769" cy="562" r="5.500"/><circle cx="769" cy="610" r="5.500"/></g>
<g fill="url(#ck2)"><rect x="799" y="346" width="42" height="42"/><rect x="799" y="394" width="42" height="42"/><rect x="799" y="443" width="42" height="42"/><rect x="799" y="492" width="42" height="42"/><rect x="799" y="541" width="42" height="42"/><rect x="799" y="590" width="42" height="42"/></g>
<path d="M816 375H824" stroke="#999" stroke-width="1.500"/><path d="M818 452L822 456" stroke="#ccc" stroke-width="2"/>
<path d="M821 508V520" stroke="#e49090" stroke-width="2.500"/>
<use href="#art" transform="translate(811,544) scale(.033)"/>
<path d="M820 600L827 612H814Z" fill="#ddd"/>
<rect x="799" y="653" width="42" height="12" fill="#cabcb0"/><path d="M800 656H840M800 660H840" stroke="#4a2f24" stroke-width="2" stroke-dasharray="3 1"/>
<g font-size="15" fill="#ececec"><text x="862" y="371">Layer37</text><text x="862" y="420">Layer35</text><text x="862" y="469">Layer33</text><text x="862" y="518">Layer32</text><text x="862" y="567">Layer34</text><text x="862" y="615">Layer36</text><text x="862" y="664" font-size="16" font-weight="bold" fill="#fff" textLength="93">#hoidap247</text></g>
<use href="#gear" transform="translate(974.500,659.500) scale(1.150)"/>
<rect x="992" y="356" width="23" height="315" rx="8" fill="#6b6b6b"/>
<path d="M1003 342L1008 351H998ZM1003 686L1008 677H998Z" fill="#8a8a8a"/>
<!-- layer buttons -->
<rect x="756.500" y="686.500" width="260" height="36" fill="#262626" stroke="#2f2f2f"/>
<g fill="#434343" stroke="#4e4e4e"><rect x="761.500" y="691.500" width="27" height="26" rx="5"/><rect x="794.500" y="691.500" width="27" height="26" rx="5"/><rect x="827.500" y="691.500" width="27" height="26" rx="5"/><rect x="860.500" y="691.500" width="36" height="26" rx="5"/><rect x="902.500" y="691.500" width="27" height="26" rx="5"/><rect x="943.500" y="691.500" width="27" height="26" rx="5"/></g>
<rect x="1002" y="691" width="10" height="27" rx="3" fill="#444"/>
<path d="M936.500 698V712" stroke="#666"/>
<g fill="none" stroke="#d8d8d8" stroke-width="1.500"><path d="M768 695H777L782 700V712H768Z"/><path d="M802 696H811L815 700V712H802Z"/><path d="M835 696H844L848 700V712H835Z"/><path d="M867 695H875L879 699V706M867 695V709H874"/><rect x="951" y="698" width="12" height="13" /><path d="M954 698V695H966V708H963"/></g>
<text x="808.500" y="710" font-size="10" fill="#ddd" text-anchor="middle">8</text><text x="841.500" y="710" font-size="10" fill="#ddd" text-anchor="middle">1</text>
<path d="M876 705H881V709H885V713H881V717H877V713H873V709H876Z" fill="#eee" transform="translate(0,-2)"/>
<path d="M885 703H893L889 707.500Z" fill="#eee"/>
<path d="M906 699H913L915 701H925V712H906Z" fill="#e6e2da"/>
<!-- bottom tabs -->
<rect x="754" y="725" width="265" height="35" fill="#1f1f1f"/>
<rect x="893" y="725" width="126" height="1.500" fill="#bbb"/>
<rect x="755" y="728" width="92" height="23" rx="2" fill="#262626"/>
<text x="760" y="744" font-size="13.500" fill="#b4b4b4" textLength="81">Brush Control</text>
<rect x="847" y="727" width="46" height="27" rx="3" fill="#363636"/>
<text x="853" y="747" font-size="13.500" fill="#b4b4b4" textLength="32">Layer</text>
<!-- brush size -->
<rect x="754" y="760" width="265" height="1" fill="#5a94c4"/>
<rect x="754" y="761" width="265" height="25" fill="#333"/>
<text x="837" y="780" font-size="14" fill="#a9a9a9" textLength="60">Brush Size</text>
<use href="#hd" x="981" y="765"/>
<rect x="754" y="786" width="265" height="60" fill="#3a3a3a"/>
<g fill="#535353"><rect x="755" y="787" width="47" height="59"/><rect x="804" y="787" width="47" height="59"/><rect x="853" y="787" width="47" height="59"/><rect x="902" y="787" width="47" height="59"/></g>
<g fill="#eee"><circle cx="778.500" cy="810" r="7.500"/><circle cx="827" cy="810" r="9"/><circle cx="876" cy="810" r="12.500"/><circle cx="925" cy="810" r="15"/></g>
<g font-size="11.500" fill="#d0d0d0" text-anchor="middle"><text x="778" y="843">12</text><text x="827" y="843">15</text><text x="876" y="843">20</text><text x="925" y="843">25</text></g>
<rect x="993" y="786" width="26" height="60" fill="#2a2a2a"/>
<rect x="995" y="800" width="23" height="33" rx="8" fill="#3e3e3e"/><rect x="995" y="810" width="23" height="6" fill="#777"/>
<path d="M1005 787L1010 795H1000ZM1005 846L1010 838H1000Z" fill="#888"/>

<!-- status -->
<rect x="1" y="847" width="1018" height="26" fill="#222"/>
<g font-size="14" fill="#b4b4b4"><text x="9" y="865" textLength="106">1600 * 1599 pixel</text><text x="126" y="865" textLength="94">(11.6 * 11.6cm)</text><text x="232" y="865" textLength="44">350 dpi</text><text x="290" y="865" textLength="63">26 % (Flip)</text><text x="368" y="865" textLength="68">( 634, 470 )</text><text x="447" y="865" textLength="372">Move Horizontally/Perpendicularly by holding down Shift</text></g>
<path d="M1018 858L1006 872M1018 862L1010 872M1018 866L1014 872" stroke="#555"/>
</svg>
</body></html>
